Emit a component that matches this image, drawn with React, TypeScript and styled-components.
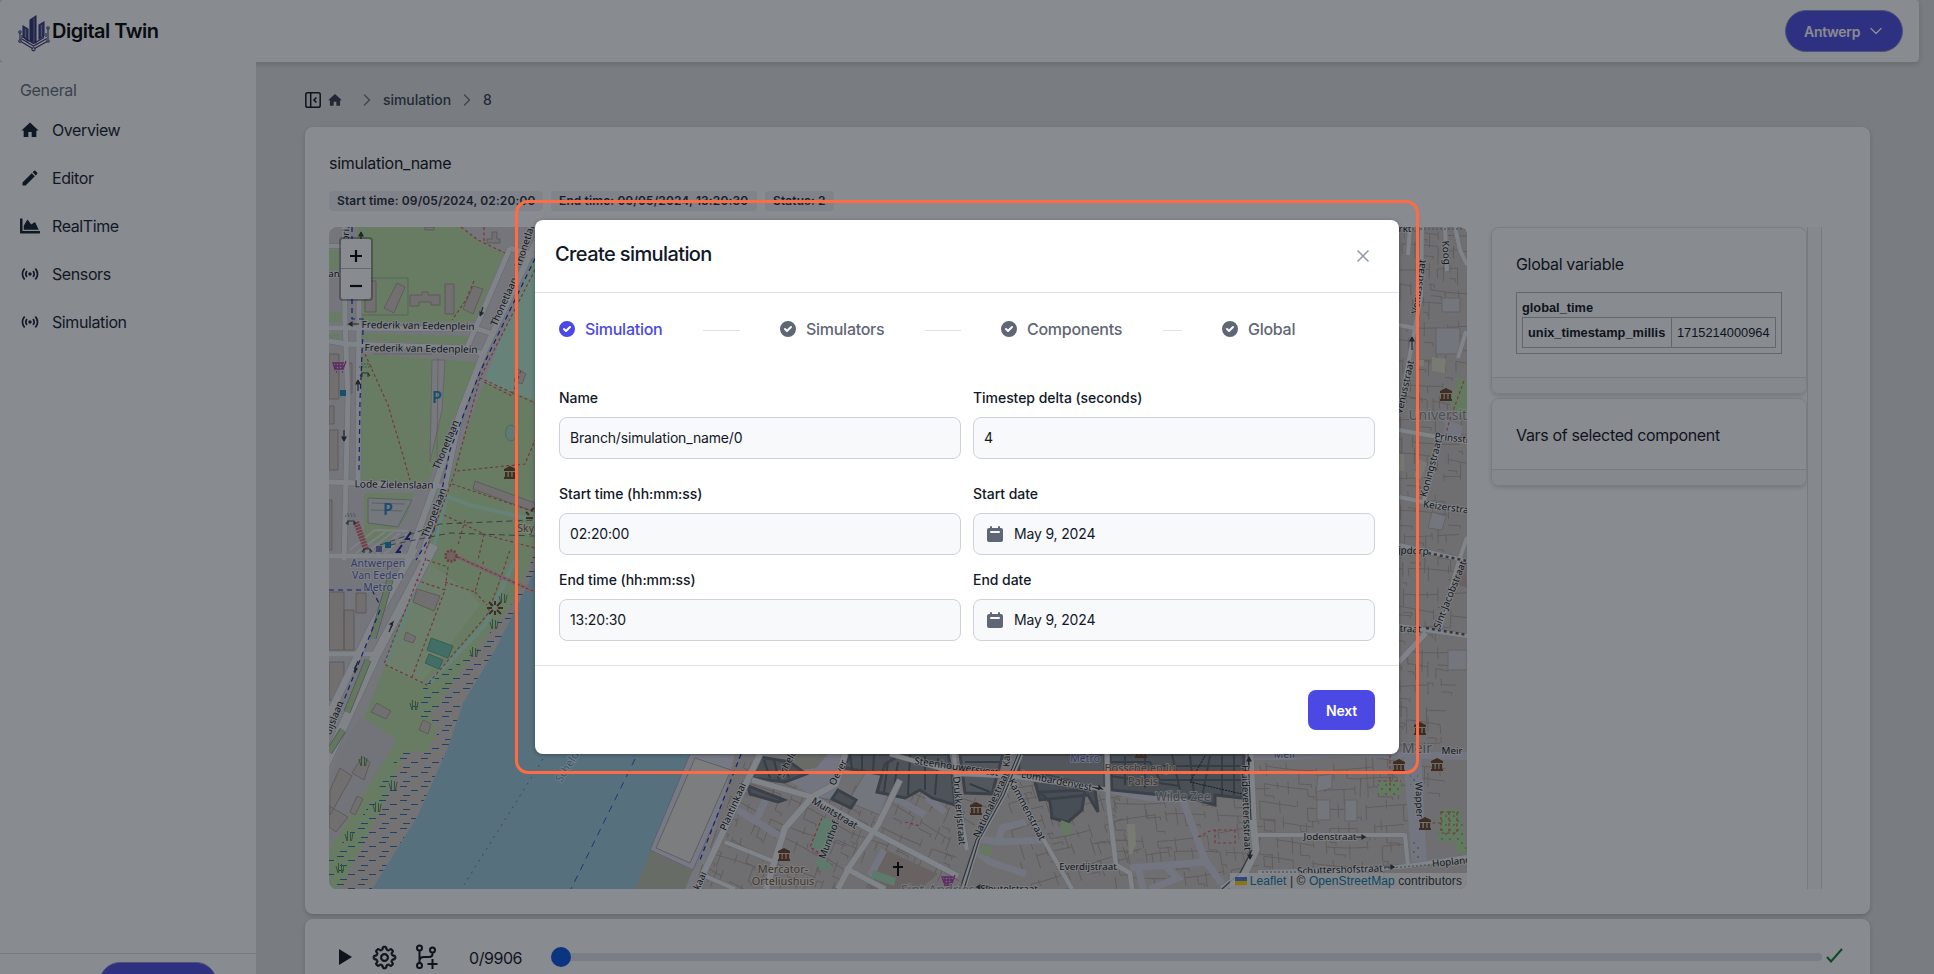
import React from "react";
import styled, { createGlobalStyle } from "styled-components";
import { MdEdit, MdSensors } from "react-icons/md";
import { FaChartArea } from "react-icons/fa";
import { HiCheckCircle, HiCalendar } from "react-icons/hi";
import { GoGear } from "react-icons/go";

const GlobalStyle = createGlobalStyle`
  * { box-sizing: border-box; }
  body { margin: 0; background: #e1e2e4; overflow: hidden; font-family: Inter, "Liberation Sans", sans-serif; color: #0b0f19; }
`;

/* ---------- page frame ---------- */
const Page = styled.div`
  height: 100vh;
  padding-right: 15px;
  display: flex;
  flex-direction: column;
  overflow: hidden;
  background: #e1e2e4;
`;
const Header = styled.header`
  flex: none;
  height: 62px;
  padding: 0 16px 0 18px;
  display: flex;
  align-items: center;
  justify-content: space-between;
  background: #fff;
  border-radius: 4px;
  box-shadow: 0 2px 6px rgba(0, 0, 0, 0.18);
  position: relative;
`;
const Brand = styled.div`
  display: flex;
  align-items: center;
  gap: 2px;
  font-size: 20px;
  font-weight: 600;
  letter-spacing: -0.5px;
  color: #000;
  svg { margin-top: 4px; }
`;
const CityButton = styled.button`
  height: 42px;
  width: 118px;
  padding: 0 20px 0 18px;
  display: flex;
  align-items: center;
  justify-content: space-between;
  border: 1px solid #8a90c8;
  border-radius: 21px;
  background: #4b48e3;
  color: #fff;
  font: 600 14px Inter, sans-serif;
  letter-spacing: -0.3px;
`;
const Columns = styled.div`
  flex: 1;
  min-height: 0;
  display: flex;
`;
const Sidebar = styled.nav`
  width: 256px;
  flex: none;
  display: flex;
  flex-direction: column;
  background: #fff;
  position: relative;
`;
const SideHeading = styled.div`
  padding: 16px 20px 0;
  height: 44px;
  line-height: 24px;
  font-size: 16px;
  letter-spacing: -0.35px;
  color: #646b79;
`;
const SideItem = styled.a`
  height: 48px;
  padding-left: 20px;
  display: flex;
  align-items: center;
  gap: 12px;
  font-size: 16px;
  letter-spacing: -0.4px;
  color: #0f172b;
`;
const SideFooter = styled.div`
  margin-top: auto;
  height: 21px;
  padding: 8px 0 0 99px;
  border-top: 1px solid #dfe0e4;
  overflow: hidden;
`;
const SidePill = styled.div`
  width: 118px;
  height: 42px;
  border: 1px solid #8a90c8;
  border-radius: 21px;
  background: #4b48e3;
`;
const Main = styled.main`
  flex: 1;
  min-width: 0;
  padding: 0 49px;
`;
const Crumbs = styled.div`
  height: 65px;
  padding-top: 11px;
  display: flex;
  align-items: center;
  font-size: 14px;
  font-weight: 500;
  color: #333a4a;
`;
const Crumb = styled.span<{ $w: number }>`
  width: ${(p) => p.$w}px;
  height: 18px;
  margin-bottom: 1px;
  display: flex;
  align-items: center;
  letter-spacing: -0.05px;
`;
const Card = styled.section`
  background: #fff;
  border-radius: 8px;
  box-shadow: 0 2px 5px rgba(0, 0, 0, 0.2);
`;
const SimCard = styled(Card)`
  height: 787px;
  padding: 24px;
  margin-bottom: 5px;
`;
const SimTitle = styled.div`
  height: 24px;
  line-height: 24px;
  font-size: 16px;
  letter-spacing: -0.27px;
`;
const Badges = styled.div`
  display: flex;
  gap: 8px;
  margin: 16px 0;
`;
const Badge = styled.span<{ $w: number }>`
  width: ${(p) => p.$w}px;
  height: 20px;
  padding-left: 8px;
  border-radius: 4px;
  background: #eeeff3;
  line-height: 20px;
  font-size: 12px;
  font-weight: 600;
  letter-spacing: 0.12px;
  color: #1f2937;
  white-space: nowrap;
`;
const SimBody = styled.div`
  display: flex;
  gap: 24px;
`;
const MapFrame = styled.div`
  width: 1138px;
  height: 662px;
  border-radius: 8px;
  overflow: hidden;
  position: relative;
  > svg { display: block; }
`;
const ZoomControl = styled.div`
  position: absolute;
  left: 10px;
  top: 10px;
  width: 34px;
  border: 2px solid rgba(0, 0, 0, 0.3);
  border-radius: 4px;
  background: #fff;
  background-clip: padding-box;
  div { height: 30px; padding-top: 3px; display: grid; place-items: center; }
  div:first-child { height: 30px; padding-top: 4px; border-bottom: 1px solid #bbb; }
`;
const Attribution = styled.div`
  position: absolute;
  right: 0;
  bottom: 0;
  height: 16px;
  padding: 0 5px;
  display: flex;
  align-items: center;
  gap: 3px;
  white-space: pre;
  background: rgba(255, 255, 255, 0.78);
  font: 12px "Liberation Sans", Arial, sans-serif;
  letter-spacing: 0.09px;
  color: #333;
  b { font-weight: 400; color: #0878a8; }
`;
const Side = styled.aside`
  width: 331px;
  height: 662px;
  display: flex;
`;
const Panels = styled.div`
  width: 316px;
  display: flex;
  flex-direction: column;
  gap: 4px;
`;
const Track = styled.div`
  width: 15px;
  border: solid #dcdcde;
  border-width: 0 1px;
  background: #f8f8f9;
`;
const Panel = styled.div<{ $h: number }>`
  height: ${(p) => p.$h}px;
  padding: 24px 24px 0;
  display: flex;
  flex-direction: column;
  border: 1px solid #e1e3e7;
  border-radius: 8px;
  box-shadow: 0 2px 4px rgba(0, 0, 0, 0.16);
  font-size: 16px;
  line-height: 24px;
  letter-spacing: -0.34px;
  overflow: hidden;
`;
const PanelFoot = styled.div`
  flex: none;
  margin: auto -24px 0;
  height: 16px;
  border-top: 1px solid #dfe0e3;
  background: #f9fafb;
`;
const Tree = styled.div`
  width: 266px;
  height: 62px;
  margin-top: 16px;
  padding: 5px;
  border: 1px solid #b4b6ba;
  font: bold 12.8px/19px "Liberation Sans", Arial, sans-serif;
  letter-spacing: 0;
`;
const TreeRow = styled.div`
  width: 254px;
  height: 31px;
  display: flex;
  line-height: 29px;
  border: 1px solid #b4b6ba;
  span { width: 149px; padding-left: 5px; border-right: 1px solid #b4b6ba; }
  em { padding-left: 5px; font-style: normal; font-weight: 400; }
`;
const Player = styled(Card)`
  height: 90px;
  padding: 17px 27px 0 33px;
  display: flex;
  align-items: flex-start;
`;
const PlayerIcons = styled.div`
  width: 131px;
  height: 42px;
  display: flex;
  align-items: center;
`;
const BoldGear = styled(GoGear)`
  stroke: currentColor;
  stroke-width: 0.7px;
`;
const Counter = styled.div`
  width: 82px;
  height: 42px;
  line-height: 45px;
  font-size: 16px;
  letter-spacing: -0.45px;
`;
const Slider = styled.div`
  flex: 1;
  height: 8px;
  margin-top: 17px;
  border-radius: 4px;
  background: #e0e3ed;
  display: flex;
  align-items: center;
`;
const Knob = styled.div`
  width: 20px;
  height: 20px;
  border-radius: 50%;
  background: #0552e2;
`;

/* ---------- dialog ---------- */
const Backdrop = styled.div`
  position: absolute;
  inset: 0;
  background: rgba(17, 24, 31, 0.5);
`;
const Highlight = styled.div`
  position: absolute;
  left: 515px;
  top: 200px;
  width: 904px;
  height: 574px;
  padding: 17px;
  border: 3px solid #ff6b42;
  border-radius: 13px;
`;
const Dialog = styled.div`
  width: 864px;
  height: 534px;
  border-radius: 8px;
  background: #fff;
  box-shadow: 0 1px 4px rgba(0, 0, 0, 0.3);
  display: flex;
  flex-direction: column;
  color: #111827;
`;
const DialogHead = styled.div`
  height: 73px;
  padding: 20px 30px 0 20px;
  display: flex;
  justify-content: space-between;
  border-bottom: 1px solid #e1e2e8;
  font-size: 20px;
  line-height: 28px;
  font-weight: 500;
  letter-spacing: -0.6px;
  svg { margin-top: 10px; }
`;
const Steps = styled.div`
  height: 96px;
  padding: 24px 0 0 22px;
  display: flex;
`;
const Step = styled.div<{ $active?: boolean }>`
  flex: none;
  width: 221px;
  height: 24px;
  display: flex;
  align-items: center;
  font-size: 16px;
  font-weight: 500;
  letter-spacing: -0.27px;
  color: ${(p) => (p.$active ? "#4b48e3" : "#5f6675")};
  svg { margin-right: 8px; }
`;
const StepLine = styled.span`
  flex: 1;
  height: 1px;
  margin: 3px 38px 0 41px;
  background: #e0e1e6;
`;
const Form = styled.div`
  padding: 0 24px;
  height: 276px;
  display: grid;
  grid-template-columns: 402px 402px;
  grid-template-rows: 96px 86px 86px;
  column-gap: 12px;
`;
const Label = styled.label`
  display: flex;
  flex-direction: column;
  gap: 10px;
  font-size: 14px;
  line-height: 18px;
  font-weight: 500;
  letter-spacing: -0.05px;
`;
const Field = styled.div<{ $icon?: boolean }>`
  height: 42px;
  padding-left: ${(p) => (p.$icon ? 11 : 10)}px;
  display: flex;
  align-items: center;
  gap: 9px;
  border: 1px solid #ced1d9;
  border-radius: 8px;
  background: #f8f9fb;
  font-weight: 400;
  letter-spacing: -0.17px;
  svg { color: #5f6675; }
`;
const DialogFoot = styled.div`
  flex: 1;
  padding: 24px 24px 0;
  display: flex;
  justify-content: flex-end;
  border-top: 1px solid #e1e2e6;
`;
const NextButton = styled.button`
  width: 67px;
  height: 40px;
  border: 0;
  border-radius: 8px;
  background: #4b48e3;
  color: #fff;
  font: 600 14px Inter, sans-serif;
  letter-spacing: -0.15px;
`;

/* ---------- icons ---------- */
const Logo = () => (
  <svg width="32" height="37" viewBox="0 0 32 37" fill="none" stroke="#303070" strokeWidth="1.1">
    <path d="M12 5 L18 1 V28 L12 26 Z" fill="#303070" />
    <path d="M5 11 L10 14 V26 L5 22 Z M21 10 L26 7 V21 L21 24 Z" fill="#44448c" />
    <path d="M16 3 V27 M23.500 10 V22 M7.500 14 V23" stroke="#9a9ad0" strokeWidth=".8" />
    <path d="M30 14 V24 M2 18 V25 M28 18 V22 M4 20 V23" />
    <path d="M2 26 L15.500 34 L30 26 M3 23.500 L15.500 31 L29 23.500 M6 22.500 L15.500 28.500 L26 22.500" />
    <circle cx="15.500" cy="34.300" r="1.600" fill="#fff" />
    <circle cx="2" cy="17" r="1.200" fill="#fff" /><circle cx="30" cy="13" r="1.200" fill="#fff" />
    <circle cx="2" cy="26" r="1.200" fill="#fff" /><circle cx="30" cy="26" r="1.200" fill="#fff" />
  </svg>
);
const HomeIcon = ({ size }: { size: number }) => (
  <svg width={size} height={size} viewBox="0 0 24 24" fill="currentColor">
    <path d="M10 20.500 V14.500 H14 V20.500 H19.600 V12.500 H22.300 L12 3 L1.700 12.500 H4.400 V20.500 Z" />
  </svg>
);
const Chevron = ({ down, color }: { down?: boolean; color: string }) => (
  <svg width="12" height="12" viewBox="0 0 12 12" fill="none" stroke={color} strokeWidth="1.4" strokeLinecap="round" strokeLinejoin="round">
    <path d={down ? "M1 3.500 L6 8.500 L11 3.500" : "M3.500 1 L8.500 6 L3.500 11"} />
  </svg>
);
const CollapseIcon = () => (
  <svg width="16" height="16" viewBox="0 0 16 16" fill="none" stroke="#0b0f19" strokeWidth="1.500">
    <rect x=".8" y=".8" width="14.400" height="14.400" rx="1.800" />
    <path d="M5.700 1 V15" />
    <path d="M11.400 5.500 L9 8 L11.400 10.500" strokeWidth="1.600" />
  </svg>
);
const BranchIcon = () => (
  <svg width="24" height="26" viewBox="0 0 24 26" fill="none" stroke="#0b0f19" strokeWidth="2">
    <circle cx="4.500" cy="4" r="2.500" /><circle cx="17.500" cy="6" r="2.500" /><circle cx="4.500" cy="21.500" r="2.500" />
    <path d="M4.500 6.500 V19 M17.500 8.500 V10 Q17.500 13 14 13 H9 Q4.500 13 4.500 17 M17.500 15 V25 M12.500 20 H22.500" />
  </svg>
);

/* ---------- map ---------- */
type LabelSpec = [string, number, number, number, number?, string?];
const streetNames: LabelSpec[] = [
  ["Frederik van Eedenplein", 418, 329, 1, 10],
  ["Frederik van Eedenplein", 421, 352, 1, 10],
  ["Lode Zielenslaan", 394, 488, 1, 10],
  ["Thonetlaan", 529, 243, -72],
  ["Thonetlaan", 507, 303, -66],
  ["Thonetlaan", 449, 446, -67],
  ["Thonetlaan", 437, 514, -69],
  ["ori.", 349, 234, -88],
  ["an", 334, 277, 0],
  ["G", 360, 299, 0],
  ["dijslaan", 337, 719, -68],
  ["Plantinkaai", 736, 808, -66],
  ["kaai", 703, 882, -66],
  ["Oever", 841, 774, -62],
  ["Scheld", 790, 765, -62],
  ["Muntstraat", 833, 816, 31],
  ["Munthof", 832, 841, -69],
  ["Steenhouwersvest", 956, 770, 8],
  ["Drukkerijstraat", 956, 811, 85],
  ["Nationalestraat", 994, 806, -65],
  ["Kammenstraat", 1024, 811, 62],
  ["Lombardenvest", 1056, 784, 11],
  ["Kam", 1010, 757, -88],
  ["Everdijstraat", 1088, 870, 0],
  ["Sleutelstraat", 1009, 892, 0],
  ["Huidevettersstraat", 1243, 808, 88],
  ["Jodenstraat", 1330, 840, 0],
  ["Schuttershofstraat", 1340, 873, -2],
  ["Wapper", 1416, 800, 88],
  ["Hopland", 1452, 865, -6],
  ["Meir", 1452, 754, 0],
  ["Venusstraat", 1422, 287, -82],
  ["Venusstraat", 1408, 388, -77],
  ["Prinsstraat", 1459, 442, 6],
  ["Koningstraat", 1434, 469, -75],
  ["Keizerstraat", 1450, 511, 8],
  ["Sint-Jacobstraat", 1453, 596, -68],
  ["ijpdorp", 1412, 554, 3],
  ["straat", 1408, 632, 2],
  ["Koog", 1443, 253, 85],
  ["rkt", 1405, 232, 0],
];
const placeNames: LabelSpec[] = [
  ["Antwerpen", 378, 567, 0, 10.5, "#5862b8"],
  ["Van Eeden", 378, 579, 0, 10.5, "#5862b8"],
  ["Metro", 378, 591, 0, 10.5, "#5862b8"],
  ["Metro", 1085, 762, 0, 10.5, "#5862b8"],
  ["Meir", 1285, 758, 0, 10.5, "#5862b8"],
  ["Schelde", 572, 766, -58, 11, "#5a8fc0"],
  ["Mercator-", 783, 873, 0, 11, "#7a5430"],
  ["Orteliushuis", 783, 885, 0, 11, "#7a5430"],
  ["Bossche en Ju", 1140, 772, 0, 11, "#7a5430"],
  ["Paleis", 1143, 785, 0, 11, "#7a5430"],
  ["Skyl", 527, 532, 0, 10.5, "#7a5430"],
  ["Wilde Zee", 1183, 801, 0, 12, "#777"],
  ["Universiteit", 1446, 420, 0, 14, "#888"],
  ["Meir", 1417, 753, 0, 14, "#777"],
  ["Sint-Andries", 938, 894, 0, 13, "#888"],
];
const roads: [string, number][] = [
  ["M344 227 L345 320 L348 400 L344 560", 5],
  ["M359 300 L358 480 L357 486", 5],
  ["M329 328 L343 328 L478 329 L490 333", 5],
  ["M329 341 L346 344 L468 348 L482 354", 5],
  ["M329 246 H344 M329 274 H344", 4],
  ["M329 482 L440 486 L448 486", 5],
  ["M510 248 L492 290 L466 350", 5],
  ["M543 227 L484 352 L462 408 L437 480 L408 560", 6],
  ["M462 408 L446 482 L420 560", 5],
  ["M434 545 L376 655 L325 765", 9],
  ["M415 548 L370 630 L329 715", 7],
  ["M329 556 H415 M329 654 H376", 5],
  ["M510 248 L535 256", 5],
  ["M760 754 L705 870 L698 889", 6],
  ["M845 754 L836 784 L812 797 L785 828 L766 889", 6],
  ["M752 780 L812 797 L870 830 L958 876", 5],
  ["M900 780 L878 825 L850 866 L838 889", 5.5],
  ["M845 868 L885 889", 5],
  ["M725 842 L775 862 M705 876 L735 889", 4],
  ["M890 754 L960 774 L1008 776 L1070 784 L1108 790", 4],
  ["M954 754 L958 800 L967 850", 4],
  ["M1020 754 L1003 795 L978 840 L963 889", 6],
  ["M1010 778 L1045 842 L1072 889", 4],
  ["M1107 754 L1108 800 L1116 865 L1130 873 L1132 889", 4.500],
  ["M1250 754 L1253 820 L1256 850 L1245 873 L1222 889", 7],
  ["M1255 835 H1405 L1408 866", 4],
  ["M1258 872 L1365 870 L1408 866 L1467 857", 4],
  ["M1410 227 L1408 255 M1422 227 L1421 296 L1411 349 L1399 413", 4],
  ["M1445 227 L1447 271 M1455 227 L1460 250 L1467 265", 4],
  ["M1399 325 L1414 328 M1399 430 L1467 442 M1399 497 L1467 511", 4],
  ["M1466 331 L1458 358", 4],
  ["M1440 441 L1424 501", 4],
  ["M1467 537 L1458 564 L1440 628", 4],
  ["M1399 545 L1467 561 M1399 626 L1467 636", 4],
  ["M1426 633 L1399 662", 5],
];
const pedestrian =
  "M734 808 L780 836 M768 795 L757 818 M912 758 L930 800 L945 812 M895 798 L925 815 M884 850 L870 876 " +
  "M975 838 L998 842 L1045 840 M998 842 L1002 828 L1026 822 M975 850 L990 862 L1026 874 " +
  "M1100 788 L1150 798 L1182 798 M1182 798 L1205 860 L1222 884 M1130 868 L1205 862 M1165 866 L1178 878 L1150 889 M1138 866 L1143 889";
const facilities: [number, number][] = [[510, 473], [976, 809], [784, 855], [1446, 395], [1420, 729], [1399, 766], [1437, 765], [1425, 824], [1141, 752]];
const marsh = [[363, 761], [393, 785], [377, 807], [349, 836], [340, 868], [414, 705], [494, 624], [503, 598], [474, 652]];

/* terraced plots: uneven party walls hanging off a slightly crooked back line */
const Plots = ({ x, y, w, h, a, s }: { x: number; y: number; w: number; h: number; a: number; s: number }) => {
  const parts: string[] = [];
  for (let row = 0; row * 19 < h; row++) {
    const top = (px: number) => row * 19 + Math.sin(px / 31 + row * s) * 4;
    for (let i = 0, px = (row * 5) % 9; px < w; i++) {
      const step = 6 + ((i * i * s + row * 3) % 7) * 2.3;
      const drop = 6 + ((i * 7 + s * row) % 13);
      parts.push(`M${px.toFixed(1)} ${(top(px) - (i % 3) * 3).toFixed(1)} l1 ${drop}`);
      if ((i + row) % 4 !== 0) parts.push(`M${px.toFixed(1)} ${top(px).toFixed(1)} L${(px + step).toFixed(1)} ${top(px + step).toFixed(1)}`);
      if ((i + s) % 3 === 0) parts.push(`M${(px + 1).toFixed(1)} ${(top(px) + drop).toFixed(1)} h${(step * 0.7).toFixed(1)} v3`);
      px += step;
    }
  }
  return <path transform={`translate(${x} ${y}) rotate(${a})`} d={parts.join(" ")} fill="none" stroke="#aea096" strokeWidth=".9" />;
};

const MapText = ({ items }: { items: LabelSpec[] }) => (
  <g fontFamily="Noto Sans, sans-serif" textAnchor="middle" paintOrder="stroke" stroke="#fff" strokeOpacity=".55" strokeWidth="2" strokeLinejoin="round">
    {items.map(([t, x, y, r, size = 9.8, fill = "#111"], i) => (
      <text key={i} transform={`translate(${x} ${y}) rotate(${r})`} fontSize={size} fill={fill}>{t}</text>
    ))}
  </g>
);

const CityMap = () => (
  <svg width="1138" height="662" viewBox="329 227 1138 662">
    <defs>
      <pattern id="mud" width="21" height="14" patternUnits="userSpaceOnUse">
        <path d="M1 2.500 H8 M12 6.500 H19 M4 11.500 H11" stroke="#2a6fb4" strokeWidth="1" />
      </pattern>
      <pattern id="trees" width="8" height="9" patternUnits="userSpaceOnUse">
        <circle cx="2" cy="2" r=".9" fill="#6aa56a" /><circle cx="6" cy="6" r=".9" fill="#6aa56a" />
      </pattern>
      <clipPath id="town"><path d="M720 754 H1399 V227 H1467 V889 H690 Z" /></clipPath>
    </defs>
    <rect x="329" y="227" width="1138" height="662" fill="#d6d4d8" />

    <path d="M357 227 H461 L478 240 L505 252 L474 322 H357 Z M357 333 L470 336 L465 345 L357 340 Z M361 354 L478 362 L455 415 L428 482 H361 Z" fill="#bfe0a9" />
    <path d="M329 250 h10 v20 h-10 Z M329 312 h12 v10 h-12 Z M329 333 h11 v6 h-11 Z M364 493 h50 l-6 22 l-22 28 h-22 Z" fill="#bfe0a9" />
    <path d="M535 254 V410 L484 382 Z" fill="#bdeed2" />
    <path d="M484 382 L535 400 V570 L495 640 L463 703 L440 760 L400 830 L360 889 H329 V850 L396 740 L364 718 L385 665 L400 610 L425 545 Z" fill="#bfe0a9" />
    <path d="M385 665 L424 560 L470 592 L480 605 L420 684 Z" fill="#cfe6bc" fillOpacity=".6" />
    <path d="M385 665 L433 550 L446 500 M430 490 L470 505 L535 520 M427 685 L485 625 L515 560" stroke="#b9edd0" strokeWidth="4" fill="none" />
    <path d="M329 850 L396 740 L361 716 L340 752 L329 775 Z" fill="#d2d0d2" />
    <path d="M535 552 L515 600 L475 652 L430 715 L438 730 L428 752 H405 L385 800 L340 889 H372 L417 817 L447 750 L463 703 L495 650 L535 570 Z" fill="#d9cdc8" />
    <path d="M535 552 L515 600 L475 652 L425 685 L410 712 L440 728 L428 752 H400 L360 820 L329 860 V889 H372 L417 817 L447 750 L463 703 L495 650 L535 570 Z" fill="url(#mud)" />
    <path d="M535 570 L495 650 L463 703 L447 750 L417 817 L372 889 H637 L695 754 H640 V560 Z" fill="#9bc9da" />
    <path d="M475 481 L535 503 V512 L473 489 Z" fill="#d3c6c0" stroke="#a2938c" strokeWidth=".8" />
    <ellipse cx="511" cy="433" rx="5.500" ry="8" fill="#b0dcc8" stroke="#7db49c" strokeWidth=".8" />
    <path d="M431 638 L453 646 L448 658 L427 650 Z M429 654 L443 660 L439 669 L425 663 Z" fill="#70c4aa" stroke="#4a9c84" strokeWidth=".8" />
    <path d="M543 759 L464 885" stroke="#6a7c90" strokeDasharray="2 5" fill="none" />
    <path d="M635 759 L571 889" stroke="#3c4cc0" strokeDasharray="7 6" fill="none" />

    {/* quay and harbour sheds */}
    <path d="M690 754 L650 850 L693 870 L745 754 Z" fill="#dcdaea" stroke="#a9a7bd" />
    <path d="M695 758 L656 848 L690 863 L731 770 Z" fill="#e4e2df" stroke="#a9a79d" />
    <path d="M650 851 L693 870 L685 889 H635 Z" fill="#bcc0ae" />

    {/* buildings west of the river */}
    <g fill="#d3c6c0" stroke="#a2938c" strokeWidth=".8">
      <path d="M365 281 h11 v31 h-11 Z M397 283 L405 287 L394 313 L384 308 Z M410 295 h12 v-3 h6 v3 h12 v10 h-9 v-3 h-12 v4 h-9 Z M445 284 h9 v30 h-9 Z M473 286 L483 289 L473 314 L463 309 Z M487 239 h5 v-7 h5 v7 h3 v4 h-13 Z M425 227 h9 v3 h-9 Z" />
      <path d="M329 354 h10 v45 h-10 Z M329 406 h5 v18 h-5 Z M329 430 h9 v40 h-9 Z M329 500 h3 v50 h-3 Z M349 363 h3 v30 h-3 Z" />
      <path d="M417 589 L440 596 L434 611 L413 602 Z M406 632 L416 637 L413 643 L404 640 Z M377 703 L391 711 L386 719 L371 712 Z M423 720 L431 724 L428 734 L419 730 Z" />
      <path d="M329 592 h15 v58 h-15 Z M344 610 h10 v40 h-10 Z M356 593 h10 v20 h-10 Z M329 662 h15 v18 l-11 20 h-4 Z" />
      <path d="M362 757 L370 762 L364 780 L352 773 Z M340 768 L352 776 L330 815 V790 Z M329 806 L348 817 L336 832 L329 827 Z M357 796 L363 799 L355 815 L350 812 Z" />
    </g>
    <path d="M432 360 h13 l-3 50 l-12 52 Z" fill="#dcdade" stroke="#b5a6a6" strokeWidth=".8" />
    <path d="M438 358 L437 462 M373 354 H432" stroke="#b5a6a6" strokeWidth=".8" />
    <path d="M368 278 H408 V315 H362" fill="none" stroke="#8da88a" strokeWidth=".8" />
    <path d="M368 498 L412 500 L398 527 L368 523 Z M372 503 L405 504 M371 510 L402 511" fill="#d6d6d8" stroke="#a7a7a7" />
    <path d="M518 369 L526 374 L522 384 L514 381 Z" fill="#d3c6c0" stroke="#a2938c" strokeWidth=".8" />

    {/* dense old town */}
    <g clipPath="url(#town)">
      <path d="M735 754 H1467 V889 H700 Z M1399 227 H1467 V760 H1399 Z" fill="#cdc5c2" />
      <Plots x={745} y={762} w={115} h={140} a={24} s={3} />
      <Plots x={870} y={754} w={120} h={150} a={26} s={2} />
      <Plots x={1000} y={790} w={110} h={110} a={-14} s={4} />
      <Plots x={1108} y={803} w={145} h={90} a={-4} s={3} />
      <Plots x={1260} y={765} w={145} h={130} a={2} s={6} />
      <Plots x={1398} y={228} w={80} h={560} a={4} s={4} />
      <path d="M820 754 H845 L836 800 L812 796 L785 778 Z" fill="#d4d4e2" />
      <path d="M867 770 L895 778 L880 815 L848 802 Z M1318 776 l14 -2 v14 l-16 4 Z M1317 800 h13 v20 h-13 Z M1345 800 h12 v21 h-12 Z M1448 650 h19 v20 h-19 Z M1436 328 h24 v26 h-24 Z M1442 298 h18 v14 h-18 Z M1432 512 l14 4 -4 14 -14 -2 Z" fill="#d6d5da" stroke="#b9aca3" />
      <path d="M886 850 L938 874 L920 889 H868 Z M1467 560 V588 L1454 583 Z" fill="#bfaca7" />
      <path d="M790 754 L828 754 L816 768 L800 770 Z" fill="#bcc0ae" />
      <path d={pedestrian} fill="none" stroke="#d4d4e2" strokeWidth="7" />
      <path d="M1250 752 H1467 V760 L1330 757 L1290 760 H1250 Z M1403 754 H1421 L1427 868 L1412 867 Z" fill="#d4d4e2" />

      {/* shopping quarter drawn with heavy outlines */}
      <g fill="#82868c" stroke="#666b72" strokeWidth="3">
        <path d="M760 757 L790 762 L806 774 L785 782 L752 778 Z M748 786 L784 800 L778 802 L750 794 Z M838 790 L856 800 L851 808 L832 799 Z M850 754 H900 L892 776 L845 768 Z" />
        <path d="M885 764 L902 754 H948 L952 774 L955 805 L932 798 L920 790 L905 798 L877 792 Z" fill="#8b8f94" />
        <path d="M960 754 H1003 L992 794 L965 793 Z M1020 754 H1105 V790 L1050 776 L1018 773 Z" fill="#93969a" />
        <path d="M1040 792 L1085 790 L1082 810 L1068 822 L1052 818 L1050 802 Z M1033 775 L1095 790 L1098 812 L1088 795 L1040 800 Z" fill="#7f848a" />
        <path d="M1110 754 H1244 L1242 798 L1215 795 V805 L1190 798 L1112 790 Z" />
      </g>
      <g stroke="#5a6068" strokeWidth="2" fill="none">
        <path d="M764 760 L770 778 M774 760 L779 780 M784 763 L789 778 M850 754 L852 770 M862 754 V772 M874 754 L873 774 M888 762 L884 792 M898 762 L893 794 M910 754 L908 795 M925 756 V790 M938 758 L935 795 M965 762 H1000 M966 774 H996 M970 784 L990 792" />
        <path d="M1112 762 H1150 L1160 780 H1242 M1125 756 V785 M1145 758 V788 M1172 754 L1180 790 M1190 755 L1194 795 M1210 756 L1202 798 M1222 755 V796 M1234 754 V795 M1110 776 L1180 786 M1160 766 H1245" />
      </g>
      <path d="M1205 756 L1190 782 L1242 794" fill="none" stroke="#1a1a1a" strokeDasharray="2 1" />
      <path d="M822 817 L836 823 L826 852 L811 847 Z M818 857 L831 864 L829 872 L816 866 Z M873 870 L896 878 L894 886 L871 878 Z" fill="#a9dcba" />
      <path d="M981 845 L992 847 L990 857 L979 854 Z M1061 820 L1071 824 L1070 835 L1062 834 Z" fill="#b5dca0" />
      <path d="M1378 781 h23 v14 h-23 Z M1440 809 H1460 L1467 853 L1457 853 L1454 841 H1438 Z M1458 376 L1467 381 V419 L1450 406 Z" fill="#b5dca0" />
      <path d="M1378 781 h23 v14 h-23 Z M1440 809 H1460 L1467 853 L1454 841 H1438 Z M1410 775 h8 v10 h-8 Z M1412 840 h9 v20 h-9 Z" fill="url(#trees)" />
      <path d="M1127 824 l8 0 1 20 -4 10 -3 0 Z M1432 357 l14 2 -1 14 -13 -2 Z M1418 459 l9 4 -6 16 -7 -2 Z M1399 453 l5 2 v16 h-5 Z M1419 360 h5 v6 h-5 Z" fill="#dedfc6" />
      <path d="M1445 419 L1463 426 L1460 439 L1444 433 Z" fill="#d4d4e2" />
    </g>

    {/* carriageways */}
    {roads.map(([d, w], i) => <path key={i} d={d} fill="none" stroke="#bfbdc1" strokeWidth={w + 1.2} strokeLinejoin="round" />)}
    {roads.map(([d, w], i) => <path key={i} d={d} fill="none" stroke="#eff0f2" strokeWidth={w} strokeLinejoin="round" />)}
    <path d="M390 580 L373 638 M368 660 L347 712 M343 730 L329 752" stroke="#8c9488" strokeWidth="7" fill="none" />
    <path d="M390 580 L373 638 M368 660 L347 712 M343 730 L329 752" stroke="#b5d6a0" strokeWidth="5.500" fill="none" />
    <g fill="none" stroke="#e8e8ea" strokeWidth="1.800">
      <path d="M350 550 L375 530 L408 531 M356 553 L385 532 M362 556 L393 532 M372 558 L400 533 M382 556 L407 534" />
    </g>
    <g fill="none" stroke="#4c5259" strokeWidth="1.200">
      <path d="M1018 754 L1001 795 L976 840 L960 889 M1021 754 L1004 795 L979 840 L964 889 M1248 754 L1251 820 M1252 850 L1240 873 L1222 889" />
    </g>

    {/* tracks, footpaths and cycle routes */}
    <path d="M352 227 V319 H365 M363 330 L360 400 L359 470 M543 242 L480 372 L450 450 L434 530 L416 560 M329 590 H370 M338 715 L380 610 M741 754 L700 860 M372 590 L380 605" fill="none" stroke="#1c24c0" strokeWidth="1.200" strokeDasharray="5 4" />
    <g fill="none" stroke="#d8585c" strokeWidth="1.200" strokeDasharray="3 2.500">
      <path d="M461 227 L478 240 L505 253 M484 227 V242 M365 354 L388 405 L400 445 L410 480 M474 281 L466 300 L452 320" />
      <path d="M545 250 L480 378 L535 403 M480 378 L454 475 L424 555 M457 471 L525 464 L535 440 M452 484 L535 512 M484 382 L512 396 L521 370 M444 515 L486 535 L535 548 M465 520 L458 545 M484 534 L478 560" />
      <path d="M426 558 L384 664 L427 685 L487 615 L500 580 L510 550 M416 580 L445 590 L412 677 M427 560 L448 567 L445 590 M445 582 L475 592 L484 560 M475 592 L487 605" />
      <path d="M822 818 L810 847 L822 855 M905 822 L920 826 M1198 837 L1212 830 H1235 V843 H1215 V830 M1390 755 V792 M1378 781 H1401 M1441 812 H1457 V833 H1441 Z M1441 823 H1430 M1449 812 V833 M1464 381 L1450 419 L1446 433" />
    </g>
    <path d="M453 555 L535 592" stroke="#dcb4b6" strokeWidth="4" fill="none" /><path d="M453 555 L535 592" stroke="#c84850" strokeDasharray="3 2" fill="none" />
    <circle cx="451" cy="556" r="5.500" fill="#cfae9e" stroke="#cc5c60" strokeWidth="2.500" strokeDasharray="2 1.500" />
    <path d="M356 522 L366 549" stroke="#d86468" strokeWidth="6" strokeDasharray="2 1" />
    <path d="M380 545 L440 524 L535 520 M390 545 L450 533 L535 536" fill="none" stroke="#5c6c5c" strokeDasharray="6 4" />
    <path d="M1428 553 L1467 561 M1426 628 L1467 635" stroke="#555" strokeWidth="2.500" strokeDasharray="3 3" />
    <path d="M1412 229 H1467 M1262 872 H1330 M1376 869 L1440 864" stroke="#999" strokeWidth="1.500" strokeDasharray="2 2" />

    {/* one-way arrows */}
    <g stroke="#333" strokeWidth="1.200" fill="#333">
      <path d="M361 244 V232 l-2 4 h4 l-2 -4 M359 324 H349 l3 -2 v4 l-3 -2 M358 391 V380 l-2 4 h4 l-2 -4 M344 430 V441 l-2 -4 h4 l-2 4 M483 307 L480 316 l3 -3 l-3 -1 v4 M389 632 L393 622 l-3 2 l3 1 M358 661 L354 672 l3 -3 l-3 -1" />
      <path d="M1412 350 V337 l-2 4 h4 l-2 -4 M1355 837 H1365 l-3 -2 v4 l3 -2 M1384 867 H1394 l-3 -2 v4 l3 -2 M1249 768 V757 l-2 4 h4 l-2 -4 M1250 850 V859 l-2 -4 h4 l-2 4 M990 887 H977 l3 -2 v4 l-3 -2 M1092 787 L1102 789 l-3 -3 l0 4" />
    </g>
    <path d="M411 532 L406 539 h4 M402 545 L397 552 h4" stroke="#20209a" strokeWidth="2" fill="none" />

    <g fill="#6c4420">
      {facilities.map(([x, y], i) => (
        <path key={i} transform={`translate(${x} ${y})`} d="M-6 -4 L0 -7 L6 -4 V-2 H-6 Z M-5 -1 h2.500 v5 h-2.500 Z M-1.200 -1 h2.500 v5 h-2.500 Z M2.600 -1 h2.500 v5 h-2.500 Z M-6 4 h12 v2 h-12 Z" />
      ))}
    </g>
    <path d="M495 605 v-4 M495 615 v-4 M492 608 h-5 M503 608 h-5 M493 606 l-4 -4 M497 606 l4 -4 M493 610 l-4 4 M497 610 l4 4 M526 512 l3 3 M531 511 l3 -3 M526 518 h7" stroke="#6c4420" strokeWidth="2" />
    <g stroke="#548a58" fill="none">
      {marsh.map(([x, y], i) => <path key={i} transform={`translate(${x} ${y})`} d="M-4 -2 L-2 5 M-1.500 -5 V5 M1.500 -4 V5 M4 -3 L2.500 5" />)}
    </g>
    <g fill="#1a86bc">
      <rect x="340" y="390" width="6" height="6" /><rect x="385" y="542" width="6" height="6" /><rect x="376" y="546" width="6" height="6" fill="#6870b0" />
      <text x="437" y="403" textAnchor="middle" fontFamily="Noto Sans, sans-serif" fontSize="16" fontWeight="600">P</text>
      <text x="388" y="515" textAnchor="middle" fontFamily="Noto Sans, sans-serif" fontSize="16" fontWeight="600">P</text>
    </g>
    <g fill="none" stroke="#ac39ac" strokeWidth="1.300">
      <path d="M346 361 L343 369 H334 M344 363 H333 L335 369 M336 363 V369 M339 363 V369 M342 363 V369 M334 366 H344 M336 372 h1 M342 372 h1" />
      <path d="M955 875 L952 883 H944 M953 877 H942 L944 883 M945 877 V883 M948 877 V883 M951 877 V883 M943 880 H953 M944 885 H952" />
    </g>
    <g fill="none" stroke="#444" strokeWidth="1.100">
      <path d="M360 376 L362 373 H368 L370 376 M362 373 V377 M368 373 V377 M346 524 L348 521 H354 L356 524 M348 521 V525 M354 521 V525 M362 552 L364 549 H370 L372 552 M364 549 V553 M370 549 V553" />
      <path d="M359 367 H372 M361 364 H370 M345 516 H357 M347 514 H355" stroke="#5a8a50" strokeDasharray="1.500 1.500" />
    </g>
    <path d="M898 862 V876 M893 867 H903" stroke="#000" strokeWidth="2" />
    <MapText items={placeNames} />
    <MapText items={streetNames} />
  </svg>
);

/* ---------- content ---------- */
const navItems = [
  { label: "Overview", icon: <HomeIcon size={20} /> },
  { label: "Editor", icon: <MdEdit size={20} /> },
  { label: "RealTime", icon: <FaChartArea size={20} /> },
  { label: "Sensors", icon: <MdSensors size={20} /> },
  { label: "Simulation", icon: <MdSensors size={20} /> },
];
const steps = ["Simulation", "Simulators", "Components", "Global"];
const fields = [
  { label: "Name", value: "Branch/simulation_name/0" },
  { label: "Timestep delta (seconds)", value: "4" },
  { label: "Start time (hh:mm:ss)", value: "02:20:00" },
  { label: "Start date", value: "May 9, 2024", date: true },
  { label: "End time (hh:mm:ss)", value: "13:20:30" },
  { label: "End date", value: "May 9, 2024", date: true },
];

export default function App() {
  return (
    <>
      <GlobalStyle />
      <Page>
        <Header>
          <Brand><Logo />Digital Twin</Brand>
          <CityButton>Antwerp<Chevron down color="#fff" /></CityButton>
        </Header>
        <Columns>
          <Sidebar>
            <SideHeading>General</SideHeading>
            {navItems.map((n) => <SideItem key={n.label}>{n.icon}{n.label}</SideItem>)}
            <SideFooter><SidePill /></SideFooter>
          </Sidebar>
          <Main>
            <Crumbs>
              <Crumb $w={22}><CollapseIcon /></Crumb>
              <Crumb $w={34}><HomeIcon size={16} /></Crumb>
              <Crumb $w={22}><Chevron color="#6b7080" /></Crumb>
              <Crumb $w={78}>simulation</Crumb>
              <Crumb $w={22}><Chevron color="#6b7080" /></Crumb>
              <Crumb $w={10}>8</Crumb>
            </Crumbs>
            <SimCard>
              <SimTitle>simulation_name</SimTitle>
              <Badges>
                <Badge $w={214}>Start time: 09/05/2024, 02:20:00</Badge>
                <Badge $w={206}>End time: 09/05/2024, 13:20:30</Badge>
                <Badge $w={69}>Status: 2</Badge>
              </Badges>
              <SimBody>
                <MapFrame>
                  <CityMap />
                  <ZoomControl>
                    <div><svg width="14" height="14"><path d="M7 1 V13 M1 7 H13" stroke="#000" strokeWidth="2.200" /></svg></div>
                    <div><svg width="14" height="14"><path d="M1 7 H13" stroke="#000" strokeWidth="2.200" /></svg></div>
                  </ZoomControl>
                  <Attribution>
                    <svg width="12" height="8"><rect width="12" height="4" fill="#4c7be1" /><rect y="4" width="12" height="4" fill="#ffd500" /></svg>
                    <span><b>Leaflet</b> | © <b>OpenStreetMap</b> contributors</span>
                  </Attribution>
                </MapFrame>
                <Side>
                  <Panels>
                    <Panel $h={167}>
                      Global variable
                      <Tree>
                        global_time
                        <TreeRow><span>unix_timestamp_millis</span><em>1715214000964</em></TreeRow>
                      </Tree>
                      <PanelFoot />
                    </Panel>
                    <Panel $h={88}>
                      Vars of selected component
                      <PanelFoot />
                    </Panel>
                  </Panels>
                  <Track />
                </Side>
              </SimBody>
            </SimCard>
            <Player>
              <PlayerIcons>
                <svg width="34" height="18"><path d="M1 1 L14 9 L1 17 Z" fill="#0b0f19" /></svg>
                <BoldGear size={25} />
                <svg width="18" height="2" />
                <BranchIcon />
              </PlayerIcons>
              <Counter>0/9906</Counter>
              <Slider><Knob /></Slider>
              <svg width="21" height="42" fill="none"><path d="M5 21 L9 25.500 L20 13" stroke="#0c7a26" strokeWidth="2" /></svg>
            </Player>
          </Main>
        </Columns>
      </Page>
      <Backdrop />
      <Highlight>
        <Dialog>
          <DialogHead>
            Create simulation
            <svg width="12" height="12" stroke="#9299a6" strokeWidth="1.500"><path d="M.5 .5 L11.500 11.500 M11.500 .5 L.5 11.500" /></svg>
          </DialogHead>
          <Steps>
            {steps.map((s, i) => (
              <Step key={s} $active={i === 0}>
                <HiCheckCircle size={20} />
                {s}
                {i < 3 && <StepLine />}
              </Step>
            ))}
          </Steps>
          <Form>
            {fields.map((f) => (
              <Label key={f.label}>
                {f.label}
                <Field $icon={f.date}>{f.date && <HiCalendar size={20} />}{f.value}</Field>
              </Label>
            ))}
          </Form>
          <DialogFoot><NextButton>Next</NextButton></DialogFoot>
        </Dialog>
      </Highlight>
    </>
  );
}
